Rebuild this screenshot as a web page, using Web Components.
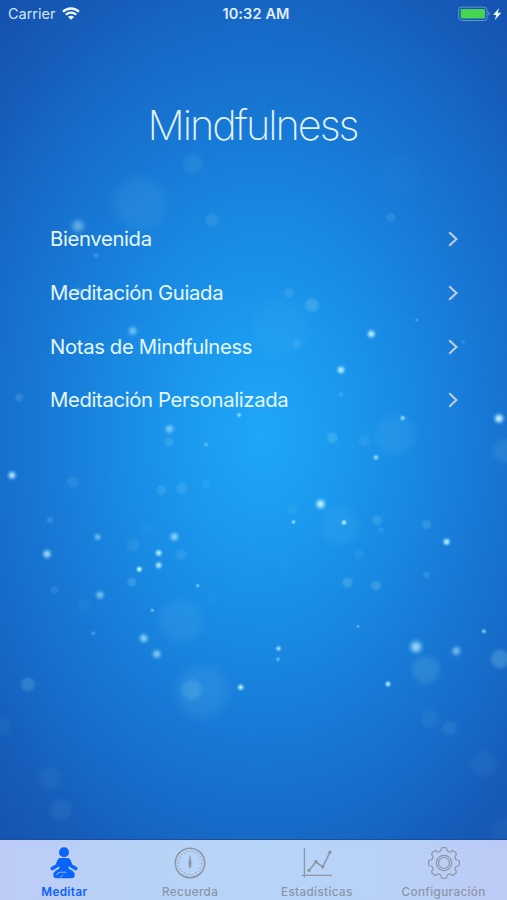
<!DOCTYPE html>
<html lang="es">
<head>
<meta charset="utf-8">
<title>Mindfulness</title>
<style>
html,body{margin:0;height:100%}
body{font-family:Inter,"Liberation Sans",sans-serif;color:#fff;overflow:hidden}
</style>
</head>
<body>
<mind-app>
  <status-bar slot="status" carrier="Carrier" time="10:32 AM"></status-bar>
  <app-title>Mindfulness</app-title>
  <menu-row>Bienvenida</menu-row>
  <menu-row>Meditación Guiada</menu-row>
  <menu-row>Notas de Mindfulness</menu-row>
  <menu-row>Meditación Personalizada</menu-row>
  <tab-item slot="tabs" icon="meditate" active>Meditar</tab-item>
  <tab-item slot="tabs" icon="clock">Recuerda</tab-item>
  <tab-item slot="tabs" icon="chart">Estadísticas</tab-item>
  <tab-item slot="tabs" icon="gear">Configuración</tab-item>
</mind-app>
<script>
const define = (name, render) => customElements.define(name, class extends HTMLElement {
  connectedCallback() {
    if (!this.shadowRoot) this.attachShadow({mode: 'open'}).innerHTML = render(this);
  }
});

// x, y, radius, opacity of the sharp sparkles
const sparks = [
  [371.3,334,6,.85],[341,370,5.8,.85],[402.7,418,3.8,.65],[499,418.5,7,.9],[376,457.5,4.1,.65],
  [239,415,3.4,.65],[12,475.3,6,.8],[47,554,6.5,.7],[158.7,553,5,.85],[158.7,565.3,5,.8],
  [139.3,569.3,4.1,1],[174.3,536.7,6.5,.6],[320.5,504,7.3,.88],[293.5,522,3.2,.65],[344,522.5,3.9,.85],
  [446.6,541.8,5.3,.85],[278.5,648.5,3.9,.7],[278,659.3,3.4,.4],[388,684,4.1,.85],[240.7,687.3,4.5,.9],
  [483.8,631.3,3.4,.6],[358,626.5,2.5,.4],[143.7,638.3,6.7,.6],[156.7,654,6.8,.55],[100,595,6.4,.5],
  [197.7,585.7,3,.5],[152.3,610.3,2.8,.5],[93.3,633.3,3,.3],[97.6,537,5.3,.42],[416,647,9.3,.68],
  [456.3,651,7,.5],[78,226,10,.4],[132.7,331,7,.45],[169.5,429,6.8,.5],[206,444.5,3.2,.38],
  [96,255.3,3.5,.22],[78,291,5,.3],[416.7,320,2.4,.3],[463.5,342,2.5,.2]
];
// x, y, radius, opacity of the soft out-of-focus discs
const discs = [
  [140,203,32,.09],[193,164,12,.1],[212,220,8,.14],[391,217,5.5,.15],[289,292.7,6,.16],
  [312,305,8.5,.24],[297,344,5.5,.16],[281,328,34,.05],[395,435,24,.09],[332.5,437.7,6.5,.24],
  [364,441,7,.1],[341,394.5,3,.15],[19,397.5,5,.18],[169,442,5.5,.18],[72.7,482,7,.13],
  [161.5,490,6,.18],[182,488,7,.16],[206,484,5,.07],[50,520,4,.18],[133,545,8,.1],
  [181,554.5,6.5,.14],[131.8,582,5.6,.22],[54.5,590,5,.12],[84,605,8,.05],[181,621,27,.09],
  [202,692,32,.11],[191.7,690,12.5,.19],[28,684.5,8.5,.2],[50,778,13,.06],[61,810,13,.08],
  [0,726,13,.06],[340,526,23,.08],[377,520.5,6,.18],[381,530,3.5,.12],[426.5,524.5,6,.17],
  [359,554,6,.08],[347.5,582.5,6.2,.24],[376,585.5,6.2,.22],[426.5,575,4.3,.18],[426,670,17,.16],
  [500,659,11.5,.26],[430,719,11,.07],[449.5,728,9,.1],[484,764,16,.06],[505,451,15,.12],
  [504,830,15,.06],[292,509,6,.08],[283,563,7,.03],[213,597,7,.04],[400,177,24,.02],[146,530,7,.04]
];

define('bokeh-field', () => `
<style>:host{position:absolute;inset:0;overflow:hidden;
  background:radial-gradient(ellipse 430px 600px at 262px 432px,#1ea7f8 0,#1b9bef 16%,#198ae3 34%,#177ad6 50%,#1769c6 68%,#165cb9 80%,#1450ae 95%,#134caa 100%)}
svg{display:block;width:100%;height:100%}</style>
<svg viewBox="0 0 507 900" preserveAspectRatio="none">
<defs>
<radialGradient id="s"><stop offset="0" stop-color="#e2ffff"/><stop offset=".35" stop-color="#b8f2ff" stop-opacity=".85"/><stop offset=".7" stop-color="#85d8ff" stop-opacity=".32"/><stop offset="1" stop-color="#7fd4ff" stop-opacity="0"/></radialGradient>
<radialGradient id="d"><stop offset="0" stop-color="#9ee2f4"/><stop offset=".6" stop-color="#9ee2f4" stop-opacity=".85"/><stop offset="1" stop-color="#9ee2f4" stop-opacity="0"/></radialGradient>
</defs>
${discs.map(([x,y,r,o]) => `<circle cx="${x}" cy="${y}" r="${r}" fill="url(#d)" opacity="${o}"/>`).join('')}
${sparks.map(([x,y,r,o]) => `<circle cx="${x}" cy="${y}" r="${r}" fill="url(#s)" opacity="${o}"/>`).join('')}
</svg>`);

define('mind-app', () => `
<style>
:host{position:relative;display:flex;flex-direction:column;width:507px;height:900px;overflow:hidden}
main{position:relative;flex:1;display:flex;flex-direction:column}
header{position:relative}
nav{position:relative;display:grid;grid-template-columns:repeat(4,1fr);height:60px;box-sizing:border-box;
 background:linear-gradient(90deg,#bdccf7,#b8d2f7 28%,#b7d5f9 52%,#b9d1f7 78%,#bccaf5);box-shadow:0 -1px 0 #1b4f9b}
</style>
<bokeh-field></bokeh-field>
<header><slot name="status"></slot></header>
<main><slot></slot></main>
<nav><slot name="tabs"></slot></nav>`);

define('status-bar', el => `
<style>
:host{display:grid;grid-template-columns:1fr auto 1fr;align-items:center;height:27px;padding:0 5px 0 8px;font-size:14.5px;color:#e0efff}
.l,.r{display:flex;align-items:center}.l{gap:7px;color:#d3e5fa}.r{justify-content:flex-end}
.c{letter-spacing:-.02px}
b{font-weight:600;font-size:14.5px;letter-spacing:.13px;padding-left:2px}
svg{display:block}
</style>
<div class="l"><span class="c">${el.getAttribute('carrier')}</span>
<svg width="18" height="13" viewBox="0 0 18 13"><g fill="none" stroke="#f0f8ff" stroke-width="2.3"><path d="M1 4.8a11.3 11.3 0 0 1 16 0"/><path d="M3.8 7.7a7.4 7.4 0 0 1 10.4 0"/></g><path d="M9 12.8 6 9.9a4.2 4.2 0 0 1 6 0z" fill="#f0f8ff"/></svg></div>
<b>${el.getAttribute('time')}</b>
<div class="r"><svg width="44" height="16" viewBox="0 0 44 16"><rect x=".6" y="1.1" width="28.4" height="13.4" rx="3" fill="none" stroke="#6795ce" stroke-width="1"/><rect x="2.6" y="3" width="24.4" height="9.6" rx="1" fill="#46d550"/><path d="M30.4 5.6q1.5.6 1.5 2.2t-1.5 2.2z" fill="#6795ce"/><path d="M41.2 2 35 9h3.3l-1.5 5.2 6.4-7.5h-3.5z" fill="#f4fbff"/></svg></div>`);

define('app-title', () => `
<style>:host{display:block;text-align:center;font-size:41.5px;font-weight:200;line-height:50px;margin:73px 0 62.4px;letter-spacing:-2.05px;text-indent:-2px;color:#e3f4ff}</style><slot></slot>`);

define('menu-row', () => `
<style>
:host{display:flex;align-items:center;justify-content:space-between;height:53.7px;padding:0 48px 0 50px;font-size:20.3px;letter-spacing:-.35px;color:#e6f8ff}
span{margin-top:-1px}
svg{display:block}
</style>
<span><slot></slot></span>
<svg width="12" height="18" viewBox="0 0 12 18"><path d="m2.2 2.2 7.2 6.8-7.2 6.8" fill="none" stroke="#bccadb" stroke-width="2.2"/></svg>`);

const ticks = Array.from({length: 24}, (_, i) => `<path d="M16 3.3v${i % 2 ? 1.3 : 2}" transform="rotate(${i * 15} 16 16)"/>`).join('');
// gear outline: eight wide rounded teeth with narrow curved valleys
const gear = (() => {
  const pt = (a, r) => { a = a * Math.PI / 180; return (16 + r * Math.sin(a)).toFixed(2) + ' ' + (16 - r * Math.cos(a)).toFixed(2); };
  let d = '';
  for (let i = 0; i < 8; i++) {
    const a = i * 45;
    d += (i ? 'L' : 'M') + pt(a - 13, 13.4) + `Q${pt(a - 11.5, 15.4)} ${pt(a - 7.5, 15.4)}A15.4 15.4 0 0 1 ${pt(a + 7.5, 15.4)}Q${pt(a + 11.5, 15.4)} ${pt(a + 13, 13.4)}C${pt(a + 16, 11.9)} ${pt(a + 29, 11.9)} ${pt(a + 32, 13.4)}`;
  }
  return d + 'z';
})();
const icons = {
  meditate: `<g fill="currentColor"><circle cx="16" cy="5.3" r="5"/><path d="M13 11h6q2.6.2 3.600 2.400L20.400 21 22 22.500q4.800 2 4.800 5.500 0 3.200-4 3.200H9.200q-4 0-4-3.200 0-3.500 4.800-5.500L11.600 21 9.400 13.400Q10.400 11.200 13 11z"/></g><path d="M11.600 13.200 9 18.800 4.300 21.500M20.400 13.200 23 18.800l4.700 2.700" fill="none" stroke="currentColor" stroke-width="3.600" stroke-linecap="round" stroke-linejoin="round"/><path d="M18 25.200h-5.500q-3.200.2-3.800 2.600M14.600 28l-1.800 2.400" fill="none" stroke="#b9d1f7" stroke-width=".8" stroke-linecap="round"/>`,
  clock: `<g fill="none" stroke="currentColor"><circle cx="16" cy="16" r="14.7" stroke-width="1.5"/><g stroke-width=".8">${ticks}</g></g><path d="M16 8.7 17.3 16 16.6 20.8h-1.2L14.7 16z" fill="currentColor" stroke="currentColor" stroke-width=".5"/>`,
  chart: `<g fill="none" stroke="currentColor" stroke-width="1.3"><path d="M3.4 1v29.5M.8 28.3h30"/><path d="m8 23.5 7-8.7 6.7 5L29 5.2" stroke-width="1.5"/></g><g fill="currentColor"><circle cx="8" cy="23.5" r="1.7"/><circle cx="15" cy="14.8" r="1.7"/><circle cx="21.7" cy="19.8" r="1.7"/><circle cx="29" cy="5.2" r="1.7"/></g>`,
  gear: `<g fill="none" stroke="currentColor" stroke-width="1.2"><path d="${gear}"/><circle cx="16" cy="16" r="7.7"/><circle cx="16" cy="16" r="5.5"/></g>`
};
define('tab-item', el => `
<style>
:host{display:flex;flex-direction:column;align-items:center;padding:7px 0 0;color:#8b95a5;font-size:11.7px;font-weight:500;line-height:16px;letter-spacing:.38px}
:host([active]){color:#0a63fb;font-weight:600;padding-left:2px}
svg{display:block;width:32px;height:32px;margin-bottom:5px}
</style>
<svg viewBox="0 0 32 32">${icons[el.getAttribute('icon')]}</svg><span><slot></slot></span>`);
</script>
</body>
</html>
